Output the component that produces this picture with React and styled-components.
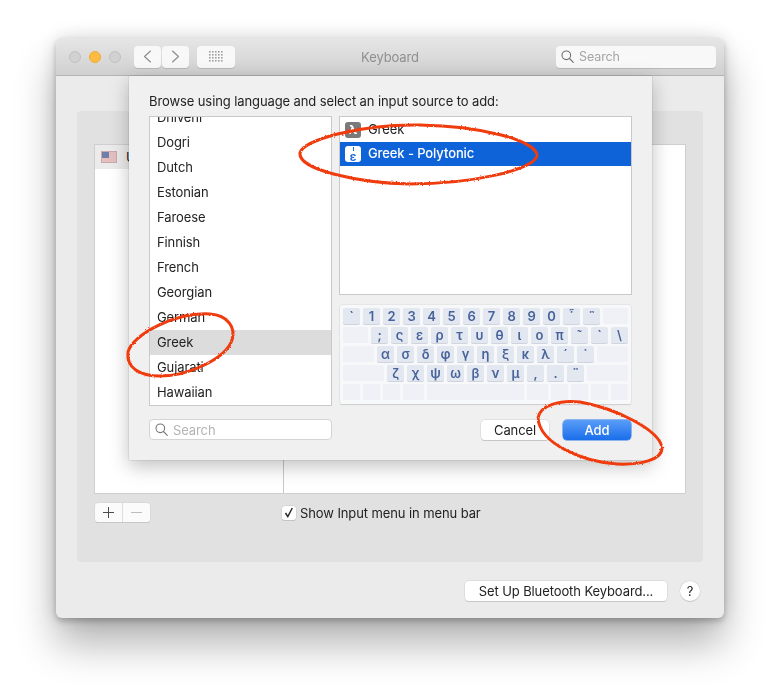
import React from 'react'
import styled, { createGlobalStyle } from 'styled-components'

const languages = ['Dhivehi', 'Dogri', 'Dutch', 'Estonian', 'Faroese', 'Finnish', 'French', 'Georgian', 'German', 'Greek', 'Gujarati', 'Hawaiian']

const keyRows = [
  { keys: ['`', '1', '2', '3', '4', '5', '6', '7', '8', '9', '0', '῟', '῝'], after: 25 },
  { before: 25, keys: [';', 'ς', 'ε', 'ρ', 'τ', 'υ', 'θ', 'ι', 'ο', 'π', '῀', '`', '\\'] },
  { before: 31, keys: ['α', 'σ', 'δ', 'φ', 'γ', 'η', 'ξ', 'κ', 'λ', '´', '᾿'], after: 31 },
  { before: 41, keys: ['ζ', 'χ', 'ψ', 'ω', 'β', 'ν', 'μ', ',', '.', '῞'], after: 41 },
]

const bottomRow = [17, 17, 17, 21, 97, 21, 17, 17]

const GlobalStyle = createGlobalStyle`
  html, body {
    margin: 0;
    background: #fff;
    font-family: Inter, "Liberation Sans", sans-serif;
    font-size: 13px;
    letter-spacing: -0.1px;
    color: #222;
  }
`

const Page = styled.div`
  position: relative;
  width: 780px;
  height: 693px;
  padding: 38px 56px 0;
  box-sizing: border-box;
  overflow: hidden;
`

const Window = styled.div`
  position: relative;
  width: 668px;
  height: 580px;
  border-radius: 6px;
  background: #ebebeb;
  box-shadow: 0 26px 40px rgba(0, 0, 0, 0.3), 0 0 20px rgba(0, 0, 0, 0.14), 0 3px 6px rgba(0, 0, 0, 0.22);
  filter: blur(0.3px);
`

const TitleBar = styled.header`
  position: relative;
  display: flex;
  align-items: center;
  height: 38px;
  padding: 0 8px 0 13px;
  box-sizing: border-box;
  border-radius: 6px 6px 0 0;
  border-bottom: 1px solid #b4b4b4;
  background: linear-gradient(#e6e6e6, #d0d0d0);
`

const Lights = styled.div`
  display: flex;
  gap: 8px;
  margin-right: 13px;
`

const Light = styled.span`
  width: 12px;
  height: 12px;
  border-radius: 50%;
  box-sizing: border-box;
  background: ${(p) => (p.$on ? '#fdbb41' : '#d1d1d1')};
  border: 1px solid ${(p) => (p.$on ? '#f0ac36' : '#c0c0c0')};
`

const ToolButton = styled.div`
  display: flex;
  align-items: center;
  justify-content: center;
  width: ${(p) => p.$w}px;
  height: 22px;
  margin-right: ${(p) => p.$mr || 0}px;
  border-radius: 4px;
  background: #f8f8f8;
  box-shadow: 0 1px 0 #b9b9b9;
`

const WindowTitle = styled.div`
  position: absolute;
  left: 0;
  right: 0;
  text-align: center;
  color: #8f8f8f;
`

const ToolSearch = styled.div`
  display: flex;
  align-items: center;
  gap: 5px;
  width: 160px;
  height: 22px;
  margin-left: auto;
  padding-left: 5px;
  box-sizing: border-box;
  border-radius: 4px;
  background: #f8f8f8;
  box-shadow: 0 1px 0 #b9b9b9;
  color: #a4a4a4;
  font-size: 12.5px;
`

const Content = styled.main`
  padding: 35px 21px 0;
`

const Group = styled.section`
  height: 451px;
  padding: 34px 18px 0;
  box-sizing: border-box;
  border-radius: 4px;
  background: #e1e1e1;
`

const Panes = styled.div`
  display: grid;
  grid-template-columns: 189px 1fr;
  height: 348px;
  background: #fff;
  box-shadow: 0 0 0 1px #cfcfcf;
`

const SourcePane = styled.div`
  border-right: 1px solid #c8c8c8;
`

const SourceHeader = styled.div`
  display: flex;
  align-items: center;
  gap: 9px;
  height: 24px;
  padding-left: 6px;
  background: #ebebeb;
`

const Flag = styled.span`
  position: relative;
  width: 16px;
  height: 12px;
  background: #e3bfbf;
  box-shadow: inset 0 0 0 1px #c9a9ab;
  &::before {
    content: '';
    position: absolute;
    left: 1px;
    top: 1px;
    width: 7px;
    height: 6px;
    background: #6f7fa8;
  }
`

const GroupControls = styled.div`
  display: grid;
  grid-template-columns: 189px 1fr;
  margin-top: 10px;
`

const PlusMinus = styled.div`
  display: flex;
  width: 55px;
  height: 19px;
  border-radius: 3px;
  background: #fbfbfb;
  box-shadow: 0 0 0 0.5px #d2d2d2, 0 1px 0 #bcbcbc;
`

const PlusMinusCell = styled.div`
  flex: 1;
  display: flex;
  align-items: center;
  justify-content: center;
  color: ${(p) => (p.$off ? '#bdbdbd' : '#4a4a4a')};
  & + & {
    border-left: 1px solid #dedede;
  }
`

const CheckRow = styled.label`
  display: flex;
  align-items: center;
  gap: 4px;
  height: 19px;
  margin-left: -2px;
`

const CheckBox = styled.span`
  display: flex;
  align-items: center;
  justify-content: center;
  width: 14px;
  height: 14px;
  border-radius: 3px;
  background: #fff;
  box-shadow: 0 0 0 0.5px #c9c9c9, 0 1px 0 #bcbcbc;
`

const Footer = styled.footer`
  display: flex;
  justify-content: flex-end;
  align-items: center;
  gap: 13px;
  margin-top: 19px;
  padding-right: 3px;
`

const PushButton = styled.button`
  width: ${(p) => p.$w}px;
  height: 20px;
  padding: 0;
  border: 0;
  border-radius: 4px;
  font: inherit;
  letter-spacing: inherit;
  color: #222;
  background: #fff;
  box-shadow: 0 0 0 0.5px #d0d0d0, 0 1px 0 #bdbdbd;
`

const HelpButton = styled(PushButton)`
  width: 20px;
  border-radius: 50%;
`

const Sheet = styled.section`
  position: absolute;
  left: 73px;
  top: 38px;
  width: 523px;
  height: 384px;
  padding: 17px 20px 0;
  box-sizing: border-box;
  background: #f0f0f0;
  box-shadow: 0 6px 18px rgba(0, 0, 0, 0.25), 0 0 1px rgba(0, 0, 0, 0.35);
`

const Prompt = styled.p`
  margin: 0 0 7px;
  line-height: 16px;
`

const Columns = styled.div`
  display: grid;
  grid-template-columns: 183px 293px;
  gap: 7px;
  height: 290px;
`

const LangList = styled.ul`
  margin: 0;
  padding: 0;
  overflow: hidden;
  list-style: none;
  background: #fff;
  border: 1px solid #c9c9c9;
`

const LangRow = styled.li`
  height: 25px;
  padding-left: 7px;
  line-height: 25px;
  background: ${(p) => (p.$selected ? '#dcdcdc' : 'transparent')};
  &:first-child {
    margin-top: -12px;
  }
`

const RightColumn = styled.div`
  display: flex;
  flex-direction: column;
  gap: 10px;
`

const SourceList = styled.div`
  height: 179px;
  box-sizing: border-box;
  background: #fff;
  border: 1px solid #c9c9c9;
`

const SourceRow = styled.div`
  display: flex;
  align-items: center;
  gap: 7px;
  height: ${(p) => p.$h}px;
  padding-left: 5px;
  font-weight: ${(p) => (p.$selected ? 500 : 400)};
  color: ${(p) => (p.$selected ? '#fff' : '#222')};
  background: ${(p) => (p.$selected ? '#0f63d9' : 'transparent')};
`

const SourceLabel = styled.span`
  margin-top: -2px;
`

const SourceIcon = styled.span`
  display: flex;
  flex-direction: column;
  align-items: center;
  justify-content: center;
  width: 16px;
  height: 16px;
  border-radius: 3px;
  font-size: 12px;
  font-weight: 700;
  line-height: 9px;
  color: ${(p) => (p.$light ? '#1e6bdc' : '#fff')};
  background: ${(p) => (p.$light ? '#fff' : '#7a7a7a')};
`

const BreathingMark = styled.span`
  width: 1px;
  height: 4px;
  margin-bottom: 1px;
  background: #1e6bdc;
`

const Keyboard = styled.div`
  display: flex;
  flex-direction: column;
  gap: 3px;
  width: 285px;
  height: 93px;
  margin-left: 1px;
  padding: 3px;
  border-radius: 2px;
  background: #f7f8fa;
  box-shadow: 0 0 0 0.5px #dcdcdc, 0 1px 1px rgba(0, 0, 0, 0.2);
`

const KeyRow = styled.div`
  display: flex;
  gap: 3px;
`

const Key = styled.span`
  display: flex;
  align-items: center;
  justify-content: center;
  flex: none;
  width: ${(p) => p.$w || 17}px;
  height: 16px;
  border-radius: 2px;
  font-size: 13px;
  font-weight: 600;
  line-height: 1;
  color: #47639b;
  background: #e3e7f0;
  box-shadow: 0 1px 0 #cfd4df;
`

const BlankKey = styled(Key)`
  background: #eff1f6;
  box-shadow: none;
`

const ArrowKey = styled(BlankKey)`
  background: linear-gradient(#eff1f6 47%, #fbfbfd 47%, #fbfbfd 53%, #eff1f6 53%);
`

const SheetFooter = styled.div`
  display: flex;
  align-items: center;
  margin-top: 13px;
  padding-right: 1px;
`

const SearchField = styled.div`
  display: flex;
  align-items: center;
  gap: 5px;
  width: 183px;
  height: 21px;
  margin-right: auto;
  padding-left: 5px;
  box-sizing: border-box;
  border-radius: 4px;
  border: 1px solid #d4d4d4;
  background: #fff;
  color: #b4b4b4;
`

const AddButton = styled(PushButton)`
  margin-left: 14px;
  color: #fff;
  font-weight: 500;
  background: linear-gradient(#5a9df8, #1a6eea);
  box-shadow: 0 0 0 0.5px #2a78e6;
`

const Scribbles = styled.svg`
  position: absolute;
  left: 0;
  top: 0;
  fill: none;
  stroke: #f03a10;
  stroke-width: 3;
`

const SearchIcon = ({ color = '#6f6f6f' }) => (
  <svg width="13" height="13" viewBox="0 0 13 13" fill="none" stroke={color} strokeWidth="1.1" strokeLinecap="round">
    <circle cx="5.3" cy="5.3" r="4.3" />
    <path d="M8.5 8.5l3.8 3.8" />
  </svg>
)

const Chevron = ({ d }) => (
  <svg width="9" height="15" viewBox="0 0 9 15" fill="none" stroke="#8a8a8a" strokeWidth="1.1" strokeLinecap="round" strokeLinejoin="round">
    <path d={d} />
  </svg>
)

const GridDots = () => (
  <svg width="14" height="11" viewBox="0 0 14 11" fill="#a0a0a0">
    {[0, 3, 6, 9].map((y) =>
      [0, 3, 6, 9, 12].map((x) => <rect key={`${x}-${y}`} x={x} y={y} width="1.6" height="1.6" />)
    )}
  </svg>
)

const App = () => {
  return (
    <Page>
      <GlobalStyle />
      <Window>
        <TitleBar>
          <Lights>
            <Light />
            <Light $on />
            <Light />
          </Lights>
          <ToolButton $w={27} $mr={1}>
            <Chevron d="M7.5 2L1.5 7.5 7.5 13" />
          </ToolButton>
          <ToolButton $w={27} $mr={8}>
            <Chevron d="M1.5 2L7.5 7.5 1.5 13" />
          </ToolButton>
          <ToolButton $w={38}>
            <GridDots />
          </ToolButton>
          <WindowTitle>Keyboard</WindowTitle>
          <ToolSearch>
            <SearchIcon />
            Search
          </ToolSearch>
        </TitleBar>
        <Content>
          <Group>
            <Panes>
              <SourcePane>
                <SourceHeader>
                  <Flag />
                  U.S.
                </SourceHeader>
              </SourcePane>
              <div />
            </Panes>
            <GroupControls>
              <PlusMinus>
                <PlusMinusCell>
                  <svg width="13" height="13" viewBox="0 0 13 13" stroke="currentColor" strokeWidth="1">
                    <path d="M6.5 1v11M1 6.5h11" />
                  </svg>
                </PlusMinusCell>
                <PlusMinusCell $off>
                  <svg width="13" height="13" viewBox="0 0 13 13" stroke="currentColor" strokeWidth="1">
                    <path d="M1 6.5h11" />
                  </svg>
                </PlusMinusCell>
              </PlusMinus>
              <CheckRow>
                <CheckBox>
                  <svg width="10" height="11" viewBox="0 0 10 11" fill="none" stroke="#222" strokeWidth="1.4">
                    <path d="M1.5 6l2.3 3.6L8.3 1" />
                  </svg>
                </CheckBox>
                Show Input menu in menu bar
              </CheckRow>
            </GroupControls>
          </Group>
          <Footer>
            <PushButton $w={202}>Set Up Bluetooth Keyboard...</PushButton>
            <HelpButton>?</HelpButton>
          </Footer>
        </Content>
        <Sheet>
          <Prompt>Browse using language and select an input source to add:</Prompt>
          <Columns>
            <LangList>
              {languages.map((name) => (
                <LangRow key={name} $selected={name === 'Greek'}>
                  {name}
                </LangRow>
              ))}
            </LangList>
            <RightColumn>
              <SourceList>
                <SourceRow $h={25}>
                  <SourceIcon>λ</SourceIcon>
                  <SourceLabel>Greek</SourceLabel>
                </SourceRow>
                <SourceRow $h={24} $selected>
                  <SourceIcon $light>
                    <BreathingMark />ε
                  </SourceIcon>
                  <SourceLabel>Greek - Polytonic</SourceLabel>
                </SourceRow>
              </SourceList>
              <Keyboard>
                {keyRows.map((row, index) => (
                  <KeyRow key={index}>
                    {row.before && <BlankKey $w={row.before} />}
                    {row.keys.map((k, i) => (
                      <Key key={i}>{k}</Key>
                    ))}
                    {row.after && <BlankKey $w={row.after} />}
                  </KeyRow>
                ))}
                <KeyRow>
                  {bottomRow.map((w, i) => (
                    <BlankKey key={i} $w={w} />
                  ))}
                  <ArrowKey />
                  <BlankKey />
                </KeyRow>
              </Keyboard>
            </RightColumn>
          </Columns>
          <SheetFooter>
            <SearchField>
              <SearchIcon color="#777" />
              Search
            </SearchField>
            <PushButton $w={68}>Cancel</PushButton>
            <AddButton $w={68}>Add</AddButton>
          </SheetFooter>
        </Sheet>
      </Window>
      <Scribbles width="780" height="693" viewBox="0 0 780 693">
        <defs>
          <filter id="rough" x="-5%" y="-5%" width="110%" height="110%">
            <feTurbulence type="fractalNoise" baseFrequency="0.55" numOctaves="2" seed="4" />
            <feDisplacementMap in="SourceGraphic" scale="2.5" />
          </filter>
        </defs>
        <g filter="url(#rough)">
          <path d="M300 153C303 140 360 124 420 125C480 126 535 140 537 155C536 170 470 184 410 184C360 183 298 170 300 153Z" />
          <path d="M128 352C132 335 175 312 210 314C228 315 236 328 232 340C226 358 190 376 160 376C140 376 126 368 128 352Z" />
          <path d="M538 418C540 405 560 400 580 402C615 408 660 430 662 448C662 460 640 465 617 464C585 462 540 445 538 418Z" />
        </g>
      </Scribbles>
    </Page>
  )
}

export default App
